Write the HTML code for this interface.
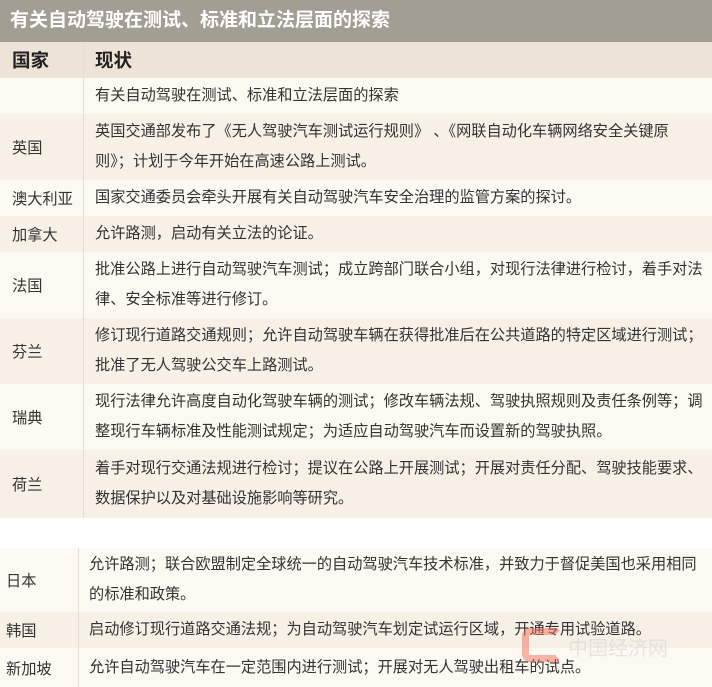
<!DOCTYPE html>
<html><head><meta charset="utf-8"><style>
*{margin:0;padding:0;box-sizing:border-box}
body{width:712px;height:687px;background:#fff;position:relative;overflow:hidden;font-family:"Liberation Sans","Noto Sans CJK SC",sans-serif;color:#333;font-size:15.2px}
.r{position:absolute;left:0;width:712px}
.a{background:#fcf8f2}.b{background:#f6f0e7}
.c1{position:absolute;top:0;bottom:0;display:flex;align-items:center}
.c2{position:absolute;top:0;bottom:0;display:flex;align-items:center;line-height:30px;white-space:nowrap}
.t{left:0;height:42px;top:0;background:#a29e94;color:#fff;font-weight:bold;font-size:19px;line-height:42px;padding-left:10px}
.h{background:#ede3d6;font-weight:bold;font-size:18.5px;color:#222}
.v{position:absolute;top:0;bottom:0;width:1px;background:#e4ddd2}
</style></head><body>
<div class="r t">有关自动驾驶在测试、标准和立法层面的探索</div>
<div class="r h" style="top:42px;height:36px"><div class="c1" style="left:12px">国家</div><div class="c1" style="left:95px">现状</div><div class="v" style="left:83px"></div></div>

<div class="r a" style="top:78px;height:36px"><div class="v" style="left:83px"></div><div class="c2" style="left:95px">有关自动驾驶在测试、标准和立法层面的探索</div></div>
<div class="r b" style="top:114px;height:66px"><div class="v" style="left:83px"></div><div class="c1" style="left:12px">英国</div><div class="c2" style="left:95px">英国交通部发布了《无人驾驶汽车测试运行规则》 、《网联自动化车辆网络安全关键原<br>则》；计划于今年开始在高速公路上测试。</div></div>
<div class="r a" style="top:180px;height:36px"><div class="v" style="left:83px"></div><div class="c1" style="left:12px">澳大利亚</div><div class="c2" style="left:95px">国家交通委员会牵头开展有关自动驾驶汽车安全治理的监管方案的探讨。</div></div>
<div class="r b" style="top:216px;height:36px"><div class="v" style="left:83px"></div><div class="c1" style="left:12px">加拿大</div><div class="c2" style="left:95px">允许路测，启动有关立法的论证。</div></div>
<div class="r a" style="top:252px;height:66px"><div class="v" style="left:83px"></div><div class="c1" style="left:12px">法国</div><div class="c2" style="left:95px">批准公路上进行自动驾驶汽车测试；成立跨部门联合小组，对现行法律进行检讨，着手对法<br>律、安全标准等进行修订。</div></div>
<div class="r b" style="top:318px;height:66px"><div class="v" style="left:83px"></div><div class="c1" style="left:12px">芬兰</div><div class="c2" style="left:95px">修订现行道路交通规则；允许自动驾驶车辆在获得批准后在公共道路的特定区域进行测试；<br>批准了无人驾驶公交车上路测试。</div></div>
<div class="r a" style="top:384px;height:66px"><div class="v" style="left:83px"></div><div class="c1" style="left:12px">瑞典</div><div class="c2" style="left:95px">现行法律允许高度自动化驾驶车辆的测试；修改车辆法规、驾驶执照规则及责任条例等；调<br>整现行车辆标准及性能测试规定；为适应自动驾驶汽车而设置新的驾驶执照。</div></div>
<div class="r b" style="top:450px;height:68px"><div class="v" style="left:83px"></div><div class="c1" style="left:12px">荷兰</div><div class="c2" style="left:95px">着手对现行交通法规进行检讨；提议在公路上开展测试；开展对责任分配、驾驶技能要求、<br>数据保护以及对基础设施影响等研究。</div></div>

<div class="r a" style="top:548px;height:64px"><div class="v" style="left:78px"></div><div class="c1" style="left:6px">日本</div><div class="c2" style="left:89px">允许路测；联合欧盟制定全球统一的自动驾驶汽车技术标准，并致力于督促美国也采用相同<br>的标准和政策。</div></div>
<div class="r b" style="top:612px;height:36px"><div class="v" style="left:78px"></div><div class="c1" style="left:6px">韩国</div><div class="c2" style="left:89px">启动修订现行道路交通法规；为自动驾驶汽车划定试运行区域，开通专用试验道路。</div></div>
<div class="r a" style="top:648px;height:39px"><div class="v" style="left:78px"></div><div class="c1" style="left:6px">新加坡</div><div class="c2" style="left:89px">允许自动驾驶汽车在一定范围内进行测试；开展对无人驾驶出租车的试点。</div></div>
<div style="position:absolute;left:522px;top:628px;width:40px;height:34px;border:7px solid rgba(240,110,90,.5);border-right-color:transparent;border-radius:8px"></div>
<div style="position:absolute;left:568px;top:632px;color:rgba(200,200,200,.4);font-size:20px">中国经济网</div>
</body></html>
